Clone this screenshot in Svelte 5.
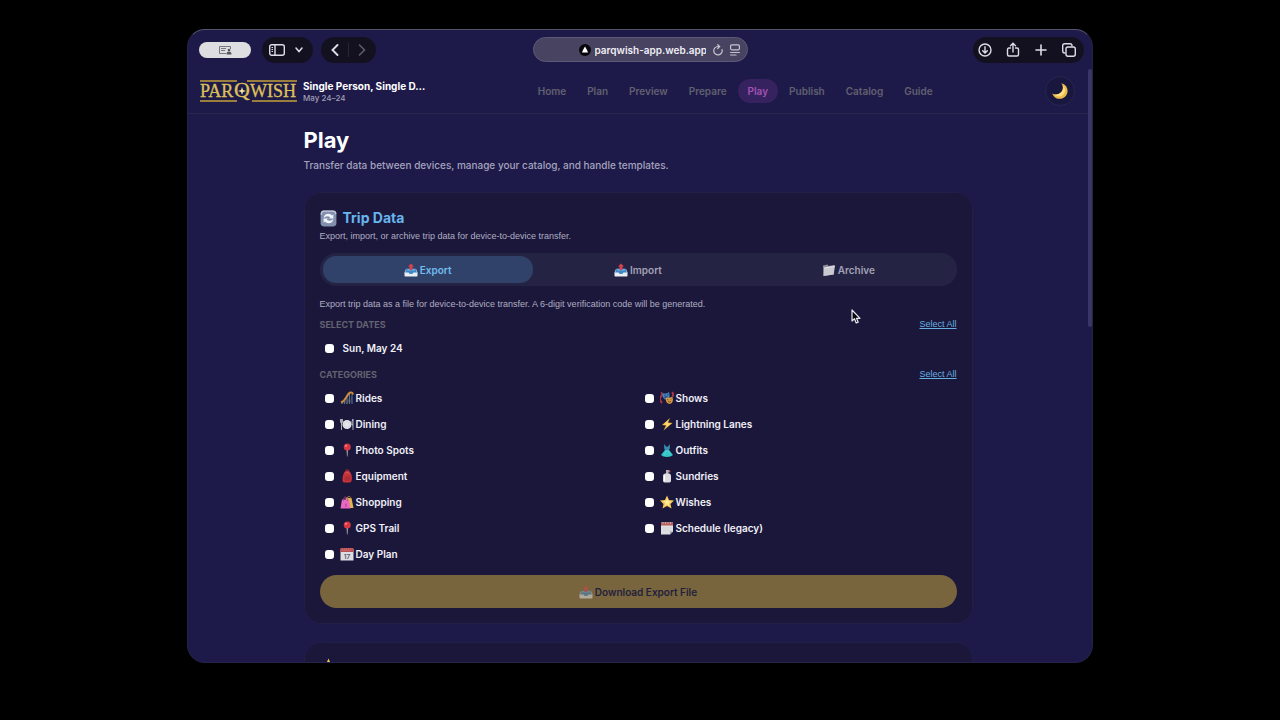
<script>
  const navItems = ['Home', 'Plan', 'Preview', 'Prepare', 'Play', 'Publish', 'Catalog', 'Guide'];
  const tabs = [
    { name: 'Export', icon: 'tray' },
    { name: 'Import', icon: 'tray' },
    { name: 'Archive', icon: 'folder' },
  ];

  let url = $state('parqwish-app.web.app');
  let activeTab = $state('Export');
  let dates = $state([{ name: 'Sun, May 24', checked: false }]);
  let categories = $state([
    { name: 'Rides', icon: 'coaster', checked: false },
    { name: 'Shows', icon: 'masks', checked: false },
    { name: 'Dining', icon: 'plate', checked: false },
    { name: 'Lightning Lanes', icon: 'bolt', checked: false },
    { name: 'Photo Spots', icon: 'pin', checked: false },
    { name: 'Outfits', icon: 'dress', checked: false },
    { name: 'Equipment', icon: 'backpack', checked: false },
    { name: 'Sundries', icon: 'bottle', checked: false },
    { name: 'Shopping', icon: 'bags', checked: false },
    { name: 'Wishes', icon: 'star', checked: false },
    { name: 'GPS Trail', icon: 'pin', checked: false },
    { name: 'Schedule (legacy)', icon: 'notepad', checked: false },
    { name: 'Day Plan', icon: 'calendar', checked: false },
  ]);

  let nothingSelected = $derived(![...dates, ...categories].some((item) => item.checked));

  function selectAll(list) {
    list.forEach((item) => (item.checked = true));
  }
</script>

{#snippet emoji(name)}
  <svg class="emoji" viewBox="0 0 28 28" aria-hidden="true">
    {#if name === 'tray'}
      <path d="M4 12h20l3 7v6.500q0 1.500-1.500 1.500h-23Q1 27 1 25.500V19z" fill="#e9eef5" />
      <path d="M5 11h18l3 8h-7q-1 3-5 3t-5-3H2z" fill="#3f86c6" />
      <path d="M7 12h14l1 3H6z" fill="#6fb1e4" />
      <path d="M14 1l6 6h-3v7h-6V7H8z" fill="#d8424b" />
    {:else if name === 'folder'}
      <path d="M2 5l9-2 2 3 12-2-1 19-21 3z" fill="#8e8f99" />
      <path d="M4 9l22-4-3 18-20 3z" fill="#c9c9d0" />
      <path d="M5 10l20-3.500" stroke="#ececf0" stroke-width="1.500" />
    {:else if name === 'coaster'}
      <path d="M4 26V20M9 26v-9M14 26V12M19 26V6M24 26V7" stroke="#4a78a8" stroke-width="2" />
      <path d="M2 23Q9 20 13 12T21 3q4-1 5 4" fill="none" stroke="#c98a3c" stroke-width="4" />
      <path d="M4 26l10-9 5 8 5-13M9 18l5 8 5-13" fill="none" stroke="#806a56" stroke-width="1" />
    {:else if name === 'masks'}
      <path d="M2 3q5 3 0 8t2 13M24 2q4 5 1 9" fill="none" stroke="#a63645" stroke-width="4" />
      <path d="M5 4q7 3 13-2 4 14-5 16Q4 16 5 4z" fill="#4383bd" />
      <path d="M8 8l3 1M14 8l3-1M9 13q3-2 6-1" stroke="#183255" stroke-width="1.500" />
      <path d="M12 13q7 2 13-2 3 14-6 15-9-2-7-13z" fill="#d79a45" />
      <path d="M14 17l3 1M21 17l2-1M16 21q4 3 6-1" fill="none" stroke="#5b351e" stroke-width="1.500" />
    {:else if name === 'plate'}
      <circle cx="14" cy="15" r="9" fill="#e4e5ea" />
      <circle cx="14" cy="15" r="6" fill="none" stroke="#c9cad2" />
      <path d="M1 4v6q0 2 2 2t2-2V4M3 4v22M26 26V4q-3 4-2 12h2" fill="none" stroke="#c5c6cf" stroke-width="1.700" />
    {:else if name === 'bolt'}
      <path d="M20 2L4 16l8 1-5 10 18-15-9-1z" fill="#f0b640" />
      <path d="M18 5L8 15l7 1-3 6 9-9-7-1z" fill="#ffdc71" />
    {:else if name === 'pin'}
      <path d="M13 12h3l-1 15h-1z" fill="#adb0bb" />
      <circle cx="14.500" cy="8" r="7" fill="#d83641" />
      <circle cx="12" cy="5.500" r="2" fill="#ff8e91" />
    {:else if name === 'dress'}
      <path d="M9 2l2 5 3 1 3-1 2-5v8l-1 4q4 5 8 10-4 4-12 4T2 24q4-5 8-10l-1-4z" fill="#35c4c6" />
      <path d="M9 2l2 5 3 1 3-1 2-5v8l-1 4h-8l-1-4z" fill="#3d89b5" />
      <path d="M13 15l-4 10M16 15l4 10" stroke="#68dedb" stroke-width="1" />
    {:else if name === 'backpack'}
      <path d="M11 4q0-3 4-3 3 0 3 3" fill="none" stroke="#8f2429" stroke-width="2" />
      <path d="M5 23q-1-6 2-13Q9 3 15 3q6 1 8 9 2 7 0 12-1 3-5 3H9q-4 0-4-4z" fill="#c6343a" />
      <path d="M9 17q0-3 3-3h7q3 0 2 4l-1 6H9z" fill="#b12c34" />
      <path d="M11 8q4-3 8 1" fill="none" stroke="#e36565" stroke-width="1.500" />
    {:else if name === 'bottle'}
      <path d="M12 2h5l3 2-1 2h-2v5h-5z" fill="#b5b5bc" />
      <path d="M6 14q0-5 5-5h6q5 0 5 5v9q0 4-3 4H9q-3 0-3-4z" fill="#dddce0" />
      <path d="M9 13v11" stroke="#fff" stroke-width="2" />
      <circle cx="19" cy="5" r="2" fill="#c74e50" />
    {:else if name === 'bags'}
      <path d="M11 6h12l4 20H16z" fill="#ddb64c" />
      <path d="M14 7q1-5 5-4 3 1 3 5" fill="none" stroke="#ad7c32" stroke-width="2" />
      <path d="M4 9h14l3 18H1z" fill="#e968c0" />
      <path d="M7 12q0-9 5-8 3 1 3 8" fill="none" stroke="#a73e8a" stroke-width="1.700" />
      <path d="M12 17v7" stroke="#ad398e" stroke-width="2" />
    {:else if name === 'star'}
      <path d="M14 1l4 9 10 1-7 7 2 9-9-5-9 5 2-9-7-7 10-1z" fill="#f5c552" />
      <path d="M14 5l3 7 6 1-5 4 1 6-5-4-5 3 2-6-5-4 6-1z" fill="#ffe896" />
    {:else if name === 'notepad'}
      <path d="M2 3h24v18l-6 6H2z" fill="#dfdfe3" />
      <path d="M2 3h24v6H2z" fill="#b75c59" />
      <path d="M20 27v-6h6z" fill="#999ba5" />
      <path d="M6 2v4M11 2v4M16 2v4M21 2v4" stroke="#e6dddd" />
      <path d="M5 14h18M5 18h16" stroke="#c6c6cd" />
    {:else if name === 'calendar'}
      <path d="M1 4h26v23H1z" fill="#dcdce2" />
      <path d="M1 2h26v8H1z" fill="#b94f52" />
      <path d="M4 4h20M5 7h16" stroke="#e4a5a5" stroke-dasharray="2 2" />
      <text x="14" y="23" text-anchor="middle" font-size="13" font-weight="600" fill="#565966">17</text>
    {:else if name === 'refresh'}
      <rect x="1" y="1" width="26" height="26" rx="5" fill="#8290ae" />
      <path d="M2 8Q2 2 7 2h14q5 0 5 5" fill="none" stroke="#c4cada" stroke-width="2" />
      <path d="M6 13q1-7 8-7 4 0 6 3l2-2v7h-7l2-2q-6-4-11 1zM22 15q-1 7-8 7-4 0-6-3l-2 2v-7h7l-2 2q6 4 11-1z" fill="#f0f3fa" />
    {:else if name === 'moon'}
      <path d="M17 2A13 13 0 1 1 2 19 11.500 11.500 0 0 0 17 2z" fill="#edb94c" />
      <path d="M20 5Q22 20 5 21q9 6 16-1 5-7-1-15z" fill="#ffe07d" />
    {/if}
  </svg>
{/snippet}

<div class="desktop">
  <div class="window">
    <div class="toolbar">
      <div class="group left">
        <button class="sharing" aria-label="Screen sharing">
          <svg width="14" height="10" viewBox="0 0 14 10" fill="none" stroke="#77777d">
            <path d="M8 8.500H1.500v-7h11V4M3 3.500h5M3 5.500h4" />
            <circle cx="11" cy="5" r="1.300" fill="#55555c" stroke="none" />
            <path d="M8.500 9.500q0-3 2.500-3t2.500 3z" fill="#55555c" stroke="none" />
          </svg>
        </button>
        <div class="pill sidebar">
          <button aria-label="Sidebar">
            <svg width="16" height="12" viewBox="0 0 16 12" fill="none" stroke="currentColor" stroke-width="1.400">
              <rect x="0.700" y="0.700" width="14.600" height="10.600" rx="2" />
              <path d="M6 1v10" />
              <path d="M2.500 3.500h1.500M2.500 5.500h1.500M2.500 7.500h1.500" stroke-width="1" />
            </svg>
          </button>
          <button aria-label="Tab groups">
            <svg width="8" height="6" viewBox="0 0 8 6" fill="none" stroke="currentColor" stroke-width="1.500" stroke-linecap="round"><path d="M1 1l3 3.500L7 1" /></svg>
          </button>
        </div>
        <div class="pill history">
          <button aria-label="Back">
            <svg width="8" height="12" viewBox="0 0 8 12" fill="none" stroke="currentColor" stroke-width="1.900" stroke-linecap="round"><path d="M6.500 1L1.500 6l5 5" /></svg>
          </button>
          <span class="divider"></span>
          <button class="dim" aria-label="Forward">
            <svg width="8" height="12" viewBox="0 0 8 12" fill="none" stroke="currentColor" stroke-width="1.600" stroke-linecap="round"><path d="M1.500 1l5 5-5 5" /></svg>
          </button>
        </div>
      </div>

      <div class="address">
        <svg width="12" height="12" viewBox="0 0 12 12"><circle cx="6" cy="6" r="6" fill="#08070d" /><path d="M6 2.500L8 6l1 2.500H3L4 6z" fill="#fff" /></svg>
        <input aria-label="Address" bind:value={url} />
        <button aria-label="Reload">
          <svg width="10" height="12" viewBox="0 0 10 12" fill="none" stroke="currentColor" stroke-width="1.200" stroke-linecap="round"><path d="M9 5.500a4.200 4.200 0 1 1-4-3h1.500M4.700 0.700l2 1.800-2 2" /></svg>
        </button>
        <button aria-label="Page menu">
          <svg width="10" height="12" viewBox="0 0 10 12" fill="none" stroke="currentColor" stroke-width="1.200" stroke-linecap="round"><rect x="0.600" y="0.800" width="8.800" height="5" rx="1.200" /><path d="M0.600 8.500h8.800M0.600 11h5.500" /></svg>
        </button>
      </div>

      <div class="pill actions">
        <button aria-label="Downloads">
          <svg width="14" height="14" viewBox="0 0 14 14" fill="none" stroke="currentColor" stroke-width="1.400" stroke-linecap="round"><circle cx="7" cy="7" r="6" /><path d="M7 3.800v6M4.700 7.700L7 10l2.300-2.300" /></svg>
        </button>
        <button aria-label="Share">
          <svg width="14" height="16" viewBox="0 0 14 16" fill="none" stroke="currentColor" stroke-width="1.400" stroke-linecap="round"><path d="M4.500 6H3q-1.500 0-1.500 1.500v5Q1.500 14 3 14h8q1.500 0 1.500-1.500v-5Q12.500 6 11 6H9.500M7 10V1.500M4.500 3.800L7 1.300l2.500 2.500" /></svg>
        </button>
        <button aria-label="New tab">
          <svg width="14" height="14" viewBox="0 0 14 14" fill="none" stroke="currentColor" stroke-width="1.600" stroke-linecap="round"><path d="M7 2v10M2 7h10" /></svg>
        </button>
        <button aria-label="Tab overview">
          <svg width="14" height="14" viewBox="0 0 14 14" fill="none" stroke="currentColor" stroke-width="1.400"><rect x="4" y="4" width="9.300" height="9.300" rx="2" /><path d="M3.500 10H2.500Q0.700 10 0.700 8V2.700q0-2 2-2H8q2 0 2 1.800v1" /></svg>
        </button>
      </div>
    </div>

    <div class="viewport">
      <div class="page">
        <header>
          <div class="brand">
            <svg class="logo" width="97" height="24" viewBox="0 0 97 24" role="img" aria-label="Parqwish">
              <path d="M0 2h37M47 2h50M0 22h37M52 22h45" stroke="#c3a03a" stroke-width="1.500" />
              <g fill="#dfc059" stroke="#dfc059" stroke-width="0.300" font-size="18">
                <text x="0" y="18">PAR</text>
                <text x="34" y="18" font-size="22">Q</text>
                <text x="50" y="18">WISH</text>
              </g>
              <path d="M42 8l1 3 3 1-3 1-1 3-1-3-3-1 3-1z" fill="#f7e39a" />
            </svg>
            <div class="trip">
              <strong>Single Person, Single D…</strong>
              <span>May 24–24</span>
            </div>
          </div>
          <nav>
            {#each navItems as item}
              <a href="#{item.toLowerCase()}" class:active={item === 'Play'}>{item}</a>
            {/each}
          </nav>
          <button class="theme" aria-label="Toggle theme">{@render emoji('moon')}</button>
        </header>

        <main>
          <h1>Play</h1>
          <p class="lead">Transfer data between devices, manage your catalog, and handle templates.</p>

          <section class="card">
            <h2>{@render emoji('refresh')}Trip Data</h2>
            <p class="note">Export, import, or archive trip data for device-to-device transfer.</p>

            <div class="tabs">
              {#each tabs as tab}
                <button class:active={tab.name === activeTab} onclick={() => (activeTab = tab.name)}>
                  {@render emoji(tab.icon)}{tab.name}
                </button>
              {/each}
            </div>

            <p class="note">
              Export trip data as a file for device-to-device transfer. A 6-digit verification code will be generated.
            </p>

            <div class="list-head">
              <h3>SELECT DATES</h3>
              <button onclick={() => selectAll(dates)}>Select All</button>
            </div>
            <div class="options dates">
              {#each dates as date}
                <label><input type="checkbox" bind:checked={date.checked} />{date.name}</label>
              {/each}
            </div>

            <div class="list-head">
              <h3>CATEGORIES</h3>
              <button onclick={() => selectAll(categories)}>Select All</button>
            </div>
            <div class="options categories">
              {#each categories as category}
                <label>
                  <input type="checkbox" bind:checked={category.checked} />
                  {@render emoji(category.icon)}{category.name}
                </label>
              {/each}
            </div>

            <button class="download" disabled={nothingSelected}>
              {@render emoji('tray')}Download Export File
            </button>
          </section>

          <section class="card">
            <h2>{@render emoji('star')}</h2>
          </section>
        </main>
      </div>
      <div class="scrollbar"></div>
    </div>

    <svg class="cursor" width="10" height="15" viewBox="0 0 10 15">
      <path d="M1 1v11l2.500-2.300L5.200 14l2-0.800L5.500 9.300H9z" fill="#09080f" stroke="#e8e8ee" stroke-width="1.200" stroke-linejoin="round" />
    </svg>
  </div>
</div>

<style>
  :global(body) {
    margin: 0;
    background: #000;
  }
  .desktop {
    box-sizing: border-box;
    height: 100vh;
    padding: 29px 187px 57px;
    font-family: Inter, 'Liberation Sans', sans-serif;
    font-weight: 600;
    color: #f1f0f7;
  }
  .window {
    position: relative;
    box-sizing: border-box;
    height: 100%;
    display: flex;
    flex-direction: column;
    overflow: hidden;
    border: 1px solid #25224a;
    border-top-color: #55536c;
    border-radius: 18px;
    background: #1d1a4a;
  }
  button {
    display: flex;
    align-items: center;
    justify-content: center;
    margin: 0;
    padding: 0;
    border: none;
    background: none;
    color: inherit;
    font: inherit;
  }
  h1,
  h2,
  h3,
  p {
    margin: 0;
  }
  .emoji {
    width: 14px;
    height: 14px;
    flex: none;
  }

  .toolbar {
    display: grid;
    grid-template-columns: 1fr auto 1fr;
    align-items: center;
    height: 39px;
    flex: none;
    padding: 0 8px;
    color: #dddce6;
  }
  .group {
    display: flex;
    align-items: center;
  }
  .left {
    padding-left: 3px;
  }
  .sharing {
    width: 52px;
    height: 16px;
    margin-right: 11px;
    border-radius: 8px;
    background: #dedee0;
  }
  .pill {
    display: flex;
    align-items: center;
    box-sizing: border-box;
    height: 26px;
    border-radius: 13px;
    background: #13111f;
  }
  .sidebar {
    gap: 10px;
    padding: 0 10px 0 7px;
    margin-right: 8px;
  }
  .history {
    gap: 9px;
    padding: 0 10px;
  }
  .divider {
    width: 1px;
    height: 14px;
    background: #292735;
  }
  .dim {
    color: #5d5b68;
  }
  .address {
    display: flex;
    align-items: center;
    box-sizing: border-box;
    width: 215px;
    height: 25px;
    padding: 0 7px 0 45px;
    border: 1px solid #5c5976;
    border-radius: 13px;
    background: #474361;
  }
  .address input {
    flex: 1;
    min-width: 0;
    padding: 0 0 0 4px;
    border: none;
    outline: none;
    background: none;
    color: #efeef4;
    font: 600 10px/14px Inter, 'Liberation Sans', sans-serif;
  }
  .address button {
    margin-left: 7px;
    color: #c5c3d0;
  }
  .actions {
    justify-self: end;
    gap: 14px;
    padding: 0 8px 0 5px;
  }

  .viewport {
    display: flex;
    flex: 1;
    min-height: 0;
  }
  .page {
    flex: 1;
    min-width: 0;
    overflow: hidden;
  }
  .scrollbar {
    width: 4px;
    height: 258px;
    border-radius: 2px;
    background: #393564;
  }

  header {
    display: flex;
    align-items: center;
    justify-content: space-between;
    box-sizing: border-box;
    height: 45px;
    padding: 0 13px 1px 12px;
    border-bottom: 1px solid #29254f;
  }
  .brand {
    display: flex;
    align-items: center;
    gap: 6px;
  }
  .logo {
    overflow: visible;
    font-family: 'Liberation Serif', serif;
    font-weight: 400;
  }
  .trip {
    display: flex;
    flex-direction: column;
  }
  .trip strong {
    font-size: 10px;
    line-height: 14px;
    font-weight: 700;
    color: #fff;
  }
  .trip span {
    font-size: 8px;
    line-height: 10px;
    font-weight: 500;
    color: #a09eb4;
  }
  nav {
    display: flex;
    gap: 1px;
  }
  nav a {
    padding: 0 10px;
    border-radius: 12px;
    font-size: 10px;
    line-height: 24px;
    color: #62606f;
    text-decoration: none;
  }
  nav a.active {
    background: #36225f;
    color: #a252b4;
  }
  .theme {
    width: 30px;
    height: 30px;
    border: 1px solid #292553;
    border-radius: 50%;
    background: #1a173f;
  }
  .theme .emoji {
    width: 17px;
    height: 17px;
  }

  main {
    max-width: 669px;
    margin: 0 auto;
    padding-top: 12px;
  }
  h1 {
    font-size: 22px;
    line-height: 29px;
    font-weight: 700;
    color: #fff;
  }
  .lead {
    margin: 2px 0 19px;
    font-size: 10px;
    line-height: 16px;
    font-weight: 500;
    color: #a5a3bc;
  }
  .card {
    padding: 15px;
    margin-bottom: 18px;
    border: 1px solid #211e47;
    border-radius: 17px;
    background: #1a173b;
  }
  h2 {
    display: flex;
    align-items: center;
    gap: 6px;
    font-size: 14px;
    line-height: 20px;
    font-weight: 700;
    color: #68b5ed;
  }
  h2 .emoji {
    width: 17px;
    height: 17px;
  }
  .note,
  .list-head button {
    font-family: 'Liberation Sans', sans-serif;
    font-size: 9px;
    line-height: 16px;
    font-weight: 400;
    color: #b0aec2;
  }
  .tabs {
    display: flex;
    margin: 9px 0 10px;
    padding: 3px;
    border-radius: 16px;
    background: #252344;
  }
  .tabs button {
    flex: 1;
    gap: 2px;
    height: 27px;
    border-radius: 13px;
    font-size: 10px;
    color: #a3a1b5;
  }
  .tabs .active {
    background: #304269;
    color: #72bcf0;
  }
  .list-head {
    display: flex;
    align-items: center;
    justify-content: space-between;
    height: 24px;
  }
  h3 {
    font-size: 9px;
    font-weight: 700;
    color: #646270;
  }
  .list-head button {
    color: #68aee0;
    text-decoration: underline;
  }
  .options {
    display: grid;
  }
  .categories {
    grid-template-columns: 1fr 1fr;
    gap: 2px 3px;
    margin-bottom: 9px;
  }
  .options label {
    display: flex;
    align-items: center;
    gap: 2px;
    height: 24px;
    padding-left: 5px;
    font-size: 10px;
  }
  .options input {
    appearance: none;
    width: 9px;
    height: 9px;
    margin: 0 4px 0 0;
    border-radius: 3px;
    background: #fff;
  }
  .options input:checked {
    background: #68b5ed;
  }
  .dates {
    margin-bottom: 2px;
  }
  .dates input {
    margin-right: 7px;
  }
  .download {
    gap: 2px;
    width: 100%;
    height: 33px;
    border-radius: 17px;
    background: #e8bd4a;
    font-size: 10px;
    color: #1d1a3b;
  }
  .download:disabled {
    background: #78653e;
    color: #23203c;
  }
  .download:disabled .emoji {
    opacity: 0.5;
  }

  .cursor {
    position: absolute;
    left: 663px;
    top: 279px;
  }
</style>
